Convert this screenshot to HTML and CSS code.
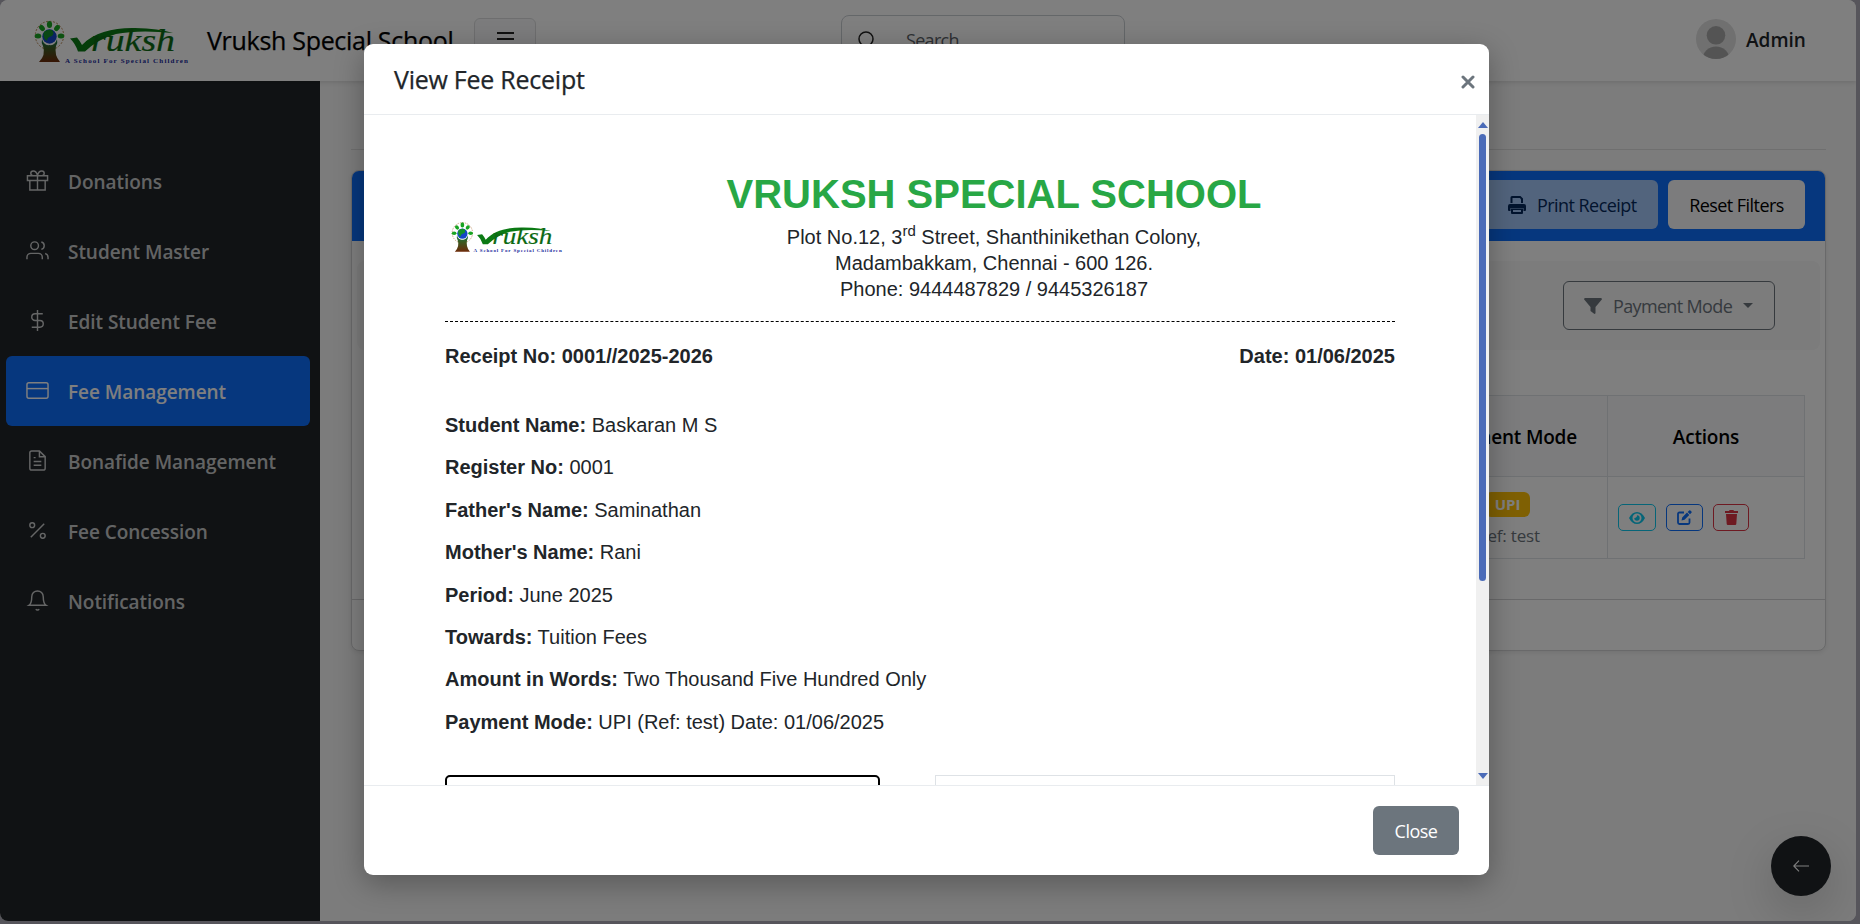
FILE: index.html
```html
<!DOCTYPE html>
<html lang="en">
<head>
<meta charset="utf-8">
<title>Vruksh Special School</title>
<link rel="stylesheet" href="styles.css">
</head>
<body>
<div class="window">
  <header class="topbar">
    <svg class="brand-logo" viewBox="0 0 158 46">
      <linearGradient id="trunk" x1="0" y1="0" x2="0" y2="1"><stop offset="0" stop-color="#0c7a50"/><stop offset=".4" stop-color="#3c5a20"/><stop offset="1" stop-color="#6e2a0a"/></linearGradient>
      <g id="logo">
        <circle cx="17.500" cy="16.500" r="14.200" fill="none" stroke="#b98a58" stroke-width="1" stroke-dasharray="2 1.500"/>
        <path d="M10 20Q9 24 11 27Q14 36 7 43H28Q22 36 24 27Q26 24 25 20Q23 27 17.500 26Q12 27 10 20Z" fill="url(#trunk)"/>
        <circle cx="17.500" cy="17.500" r="7.200" fill="#1546c8"/>
        <path d="M11.500 14Q14 10 20 11Q23 14 20 17Q15 18 15 22Q11 20 11.500 14Z" fill="#12912a"/>
        <g fill="#18a422"><ellipse cx="17.500" cy="5.500" rx="2.600" ry="3.600"/><ellipse cx="10" cy="9" rx="2.500" ry="3.300" transform="rotate(-40 10 9)"/><ellipse cx="25" cy="9" rx="2.500" ry="3.300" transform="rotate(40 25 9)"/><ellipse cx="6" cy="17" rx="3.300" ry="2.500"/><ellipse cx="29" cy="17" rx="3.300" ry="2.500"/></g>
        <path d="M38 19.500L45 18.500Q48 22 50 26C62 13 82 8.500 103 9Q127 9.500 141 14Q107 10.500 84 15Q66 20 53 32.500H46Q43 24 38 19.500Z" fill="#0b7a14"/>
        <text x="59" y="32" textLength="84" lengthAdjust="spacingAndGlyphs" class="logo-word">ruksh</text>
        <text x="33" y="43.500" textLength="123" lengthAdjust="spacing" class="logo-tag">A School For Special Children</text>
      </g>
    </svg>
    <span class="brand-name">Vruksh Special School</span>
    <button class="toggler"><svg width="20" height="20" viewBox="0 0 20 20" fill="none" stroke="#222" stroke-width="2"><path d="M2 1h17M2 7h17M2 13h17"/></svg></button>
    <div class="search">
      <span class="search-icon"><svg width="18" height="18" viewBox="0 0 18 18" fill="none" stroke="#222" stroke-width="1.500"><circle cx="8" cy="8" r="7"/><path d="M13 13l4.500 4.500"/></svg></span>
      <span class="search-text">Search</span>
    </div>
    <div class="user">
      <svg width="40" height="40" viewBox="0 0 40 40"><clipPath id="av"><circle cx="20" cy="20" r="20"/></clipPath><g clip-path="url(#av)"><rect width="40" height="40" fill="#e0e0e0"/><circle cx="20" cy="16.300" r="9.300" fill="#a9a9a9"/><ellipse cx="20" cy="40" rx="13.500" ry="12.500" fill="#a9a9a9"/></g></svg>
      <span class="user-name">Admin</span>
    </div>
  </header>

  <div class="body">
    <nav class="sidebar">
      <a class="item"><svg class="ico" viewBox="0 0 24 24"><path d="M20 12v10H4V12M1.500 7h21v5h-21zM12 22V7M12 7H7.500a2.500 2.500 0 010-5C11 2 12 7 12 7zM12 7h4.500a2.500 2.500 0 000-5C13 2 12 7 12 7z"/></svg><span>Donations</span></a>
      <a class="item"><svg class="ico" viewBox="0 0 24 24"><path d="M17 21v-2a4 4 0 00-4-4H5a4 4 0 00-4 4v2M23 21v-2a4 4 0 00-3-3.870M16 3.130a4 4 0 010 7.750"/><circle cx="9" cy="7" r="4"/></svg><span>Student Master</span></a>
      <a class="item"><svg class="ico" viewBox="0 0 24 24"><path d="M12 1v22M17.500 5H9.500a3.500 3.500 0 000 7h5a3.500 3.500 0 010 7H6"/></svg><span>Edit Student Fee</span></a>
      <a class="item active"><svg class="ico" viewBox="0 0 24 24"><rect x="1" y="4" width="22" height="16" rx="2"/><path d="M1 10h22"/></svg><span>Fee Management</span></a>
      <a class="item"><svg class="ico" viewBox="0 0 24 24"><path d="M14 2H6a2 2 0 00-2 2v16a2 2 0 002 2h12a2 2 0 002-2V8zM14 2v6h6M16 13H8M16 17H8M10 9H8"/></svg><span>Bonafide Management</span></a>
      <a class="item"><svg class="ico" viewBox="0 0 24 24"><path d="M19 5L5 19"/><circle cx="6.500" cy="6.500" r="2.500"/><circle cx="17.500" cy="17.500" r="2.500"/></svg><span>Fee Concession</span></a>
      <a class="item"><svg class="ico" viewBox="0 0 24 24"><path d="M18 8A6 6 0 006 8c0 7-3 9-3 9h18s-3-2-3-9M13.730 21a2 2 0 01-3.460 0"/></svg><span>Notifications</span></a>
    </nav>

    <main class="main">
      <div class="page-head"></div>
      <section class="card">
        <div class="card-head">
          <button class="btn-print"><svg width="18" height="18" viewBox="0 0 18 18"><path d="M4 0h8.500L15 2.500V7h-2V3.500L12 2H4.500v5h-2V1.500Q2.500 0 4 0zM2 8h14q2 0 2 2v4q0 1-1 1h-1.500v-3h-13v3H1q-1 0-1-1v-4q0-2 2-2zM3 12.500h12V17q0 1-1 1H4q-1 0-1-1zM5 14v2h8v-2z" fill="#05285c" fill-rule="evenodd"/></svg><span>Print Receipt</span></button>
          <button class="btn-reset"><span>Reset Filters</span></button>
        </div>
        <div class="card-body">
          <div class="filters">
            <button class="btn-mode"><svg width="18" height="16" viewBox="0 0 18 16"><path d="M1 0h16q1.500.5.6 1.800L11.500 9v6q-.5 1.500-1.700.5L6.500 13V9L.4 1.800Q-.5.5 1 0z" fill="#6c757d"/></svg><span>Payment Mode</span><i class="caret"></i></button>
          </div>
          <div class="table">
            <div class="cell th mode">Payment Mode</div>
            <div class="cell th">Actions</div>
            <div class="cell pay"><span class="badge">UPI</span><span class="ref">Ref: test</span></div>
            <div class="cell actions">
              <button class="mini info"><svg width="16" height="14" viewBox="0 0 16 14"><path d="M0 7Q3 1 8 1t8 6q-3 6-8 6T0 7zM8 2.500a4.500 4.500 0 100 9 4.500 4.500 0 000-9zM8 4.300A2.700 2.700 0 115.300 7Q8 7 8 4.300z" fill="#0dcaf0" fill-rule="evenodd"/></svg></button>
              <button class="mini prim"><svg width="15" height="15" viewBox="0 0 15 15"><path d="M7 2.500H2.500Q1 2.500 1 4v8.500Q1 14 2.500 14H11q1.500 0 1.500-1.500V8.500" fill="none" stroke="#0d6efd" stroke-width="1.800"/><path d="M4.500 10.500l.7-3L10 2.600l2.300 2.300-4.800 4.900zM10.700 1.900l1.400-1.400q.7-.7 1.300 0l1 1q.7.6 0 1.300l-1.400 1.400z" fill="#0d6efd"/></svg></button>
              <button class="mini dang"><svg width="13" height="15" viewBox="0 0 13 15"><path d="M0 1h4l.6-1h3.800L9 1h4v2H0zM1 4h11l-.7 10q-.1 1-1.100 1H2.800q-1 0-1.100-1z" fill="#dc3545"/></svg></button>
            </div>
          </div>
        </div>
        <div class="card-foot"></div>
      </section>
    </main>
  </div>
  <button class="fab"><svg width="16" height="12" viewBox="0 0 16 12" fill="none" stroke="#fff" stroke-width="1.100"><path d="M16 6H1M6 .7L.8 6 6 11.300"/></svg></button>
</div>

<div class="backdrop">
  <div class="modal">
    <div class="modal-head"><h5>View Fee Receipt</h5><svg width="14" height="14" viewBox="0 0 14 14" stroke="#6c757d" stroke-width="3" stroke-linecap="round"><path d="M2 2l10 10M12 2L2 12"/></svg></div>
    <div class="modal-body">
      <div class="receipt">
        <div class="r-head">
          <svg class="r-logo" viewBox="0 0 158 46"><use href="#logo"/></svg>
          <div class="r-org">
            <h1>VRUKSH SPECIAL SCHOOL</h1>
            <p>Plot No.12, 3<sup>rd</sup> Street, Shanthinikethan Colony,</p>
            <p>Madambakkam, Chennai - 600 126.</p>
            <p>Phone: 9444487829 / 9445326187</p>
          </div>
        </div>
        <div class="r-meta"><b>Receipt No: 0001//2025-2026</b><b>Date: 01/06/2025</b></div>
        <div class="r-rows">
          <p><b>Student Name:</b> Baskaran M S</p>
          <p><b>Register No:</b> 0001</p>
          <p><b>Father's Name:</b> Saminathan</p>
          <p><b>Mother's Name:</b> Rani</p>
          <p><b>Period:</b> June 2025</p>
          <p><b>Towards:</b> Tuition Fees</p>
          <p><b>Amount in Words:</b> Two Thousand Five Hundred Only</p>
          <p><b>Payment Mode:</b> UPI (Ref: test) Date: 01/06/2025</p>
        </div>
        <div class="r-boxes"><div class="box-a"></div><div class="box-b"></div></div>
      </div>
      <div class="scroll"><i class="up"></i><i class="thumb"></i><i class="down"></i></div>
    </div>
    <div class="modal-foot"><button class="btn-close"><span>Close</span></button></div>
  </div>
</div>
</body>
</html>
```
FILE: styles.css
```css
* { box-sizing: border-box; margin: 0; }
body { width: 1860px; height: 924px; overflow: hidden; background: #adabb6; font-family: "Open Sans", "Noto Sans", sans-serif; font-size: 20px; color: #212529; }
button { font: inherit; padding: 0; border: 0; background: none; display: flex; align-items: center; white-space: nowrap; }
span, p, h5 { white-space: nowrap; }
.logo-word { font: italic 400 31px "Liberation Serif", serif; fill: #0d6a14; stroke: #0d6a14; stroke-width: .2; }
.logo-tag { font: 700 7px "Liberation Serif", serif; fill: #1a2b9c; }

.window { position: relative; z-index: 0; width: 1856px; height: 921px; border-radius: 8px; overflow: hidden; background: #f8f8f8; }
.topbar { position: relative; height: 81px; display: flex; background: #fff; box-shadow: 0 2px 4px rgba(0,0,0,.1); z-index: 1; }
.brand-logo { width: 158px; height: 46px; margin: 19px 0 0 32px; overflow: visible; }
.brand-name { margin: 22px 0 0 17px; width: 267px; font-size: 25px; line-height: 36px; font-weight: 500; color: #000; letter-spacing: -0.3px; -webkit-text-stroke: .25px; }
.toggler { width: 62px; height: 48px; margin-top: 18px; border: 1px solid #dcdddf; border-radius: 6px; justify-content: center; background: #f8f9fa; }
.search { margin: 15px 0 0 305px; width: 284px; height: 49px; border: 1px solid #c9ced3; border-radius: 8px; display: flex; align-items: center; }
.search-icon { width: 49px; padding-left: 16px; line-height: 0; }
.search-text { margin-left: 15px; color: #5c6268; font-size: 18px; letter-spacing: -.7px; }
.user { margin: 19px 0 0 571px; height: 40px; display: flex; align-items: center; gap: 10px; }
.user-name { font-size: 19px; font-weight: 600; letter-spacing: 0; padding-top: 2px; }

.body { display: flex; height: 840px; }
.sidebar { width: 320px; background: #212529; padding: 65px 10px 0 6px; }
.item { height: 70px; display: flex; align-items: center; padding-left: 20px; gap: 19px; color: rgba(255,255,255,.77); font-weight: 600; font-size: 19px; letter-spacing: -.05px; border-radius: 6px; }
.item span { padding-top: 2px; }
.ico { width: 23px; height: 23px; fill: none; stroke: currentColor; stroke-width: 1.5; margin-top: -2px; }
.item.active { background: #0d6efd; color: #fff; }
.main { flex: 1; padding: 68px 30px 0 31px; background: #f8f8f8; }
.page-head { border-top: 1px solid #dfdfdf; height: 21px; }
.card { width: 1475px; height: 481px; border: 1px solid #d2d3d4; border-radius: 8px; background: #fff; overflow: hidden; display: flex; flex-direction: column; box-shadow: 0 2px 4px rgba(0,0,0,.07); }
.card-head { height: 70px; background: #0d6efd; display: flex; justify-content: flex-end; padding: 9px 20px 0 0; gap: 10px; }
.btn-print { width: 180px; height: 49px; border-radius: 6px; background: #a5c8fa; color: #04285c; padding-left: 30px; gap: 11px; font-size: 18px; letter-spacing: -.55px; }
.btn-reset { width: 137px; height: 49px; border-radius: 6px; background: #f8f9fa; color: #000; justify-content: center; font-size: 18px; letter-spacing: -.55px; }
.card-body { flex: 1; padding: 20px 5px 0; }
.filters { height: 89px; border-radius: 8px; background: #f8f8f8; display: flex; justify-content: flex-end; padding: 20px 45px 0 0; }
.btn-mode { width: 212px; height: 49px; border: 1px solid #6c757d; border-radius: 6px; color: #6c757d; padding-left: 20px; gap: 11px; font-size: 18px; letter-spacing: -.65px; }
.caret { border: 5px solid transparent; border-top-color: #6c757d; border-bottom: 0; }
.table { margin: 45px 15px 0 auto; width: 387px; display: grid; grid-template-columns: 190px 197px; grid-template-rows: 81px 82px; border-top: 1px solid #dee2e6; }
.cell { border-bottom: 1px solid #dee2e6; border-right: 1px solid #dee2e6; }
.th { display: flex; align-items: center; justify-content: center; font-weight: 600; font-size: 19px; letter-spacing: -.2px; padding-top: 2px; color: #000; background: #f8f9fa; }
.mode { padding-right: 7px; }
.pay { display: flex; flex-direction: column; align-items: center; padding-top: 15px; }
.badge { background: #ffc107; color: #fff; font-weight: 700; font-size: 15px; line-height: 25px; border-radius: 6px; padding: 0 10px; margin-right: 10px; }
.ref { font-size: 17px; line-height: 24px; margin: 7px 8px 0 0; color: #6c757d; letter-spacing: -.2px; }
.actions { display: flex; padding: 27px 0 0 10px; gap: 10px; }
.mini { height: 27px; border: 1px solid; border-radius: 5px; justify-content: center; }
.info { width: 38px; color: #0dcaf0; }
.prim { width: 37px; color: #0d6efd; }
.dang { width: 36px; color: #dc3545; }
.card-foot { height: 51px; border-top: 1px solid #d2d3d4; }
.fab { position: absolute; left: 1771px; top: 836px; width: 60px; height: 60px; border-radius: 50%; background: #212529; justify-content: center; box-shadow: 0 16px 48px rgba(0,0,0,.175); }

.backdrop { position: absolute; z-index: 5; inset: 0; background: rgba(0,0,0,.5); padding: 44px 0 0 364px; overflow: hidden; }
.modal { width: 1125px; height: 831px; border-radius: 9px; background: #fff; box-shadow: 0 8px 30px rgba(0,0,0,.3); display: flex; flex-direction: column; }
.modal-head { height: 71px; border-bottom: 1px solid #e9ecef; display: flex; justify-content: space-between; padding: 17px 14px 0 30px; }
.modal-head h5 { font-size: 25px; line-height: 36px; font-weight: 500; letter-spacing: -.25px; -webkit-text-stroke: .25px; }
.modal-head svg { margin-top: 14px; }
.modal-body { height: 670px; display: flex; overflow: hidden; font-family: "Liberation Sans", sans-serif; line-height: 26px; }
.receipt { width: 1112px; padding: 53px 81px 0; }
.r-head { height: 154px; border-bottom: 1px dashed #000; display: flex; }
.r-logo { width: 115px; height: 33px; margin: 53px 0 0 4px; overflow: visible; }
.r-org { margin-left: 154px; width: 552px; text-align: center; }
.r-org h1 { margin-bottom: 5px; padding-top: 1px; font-size: 40px; line-height: 50px; font-weight: 700; color: #28a745; white-space: nowrap; }
sup { font-size: 15px; line-height: 0; }
.r-meta { display: flex; justify-content: space-between; margin-top: 21px; }
.r-rows { margin-top: 43px; display: grid; row-gap: 16.4px; }
.r-boxes { display: flex; justify-content: space-between; margin-top: 40px; }
.box-a { width: 435px; height: 100px; border: 2px solid #000; border-radius: 5px; }
.box-b { width: 460px; height: 100px; border: 1px solid #dee2e6; }
.scroll { width: 13px; height: 670px; background: #f0f0f0; display: flex; flex-direction: column; align-items: center; padding-top: 7px; }
.up { border: 5px solid transparent; border-top: 0; border-bottom: 6px solid #4b6bb8; }
.thumb { width: 7px; height: 447px; border-radius: 4px; background: #4b6bb8; margin: 6px 0 192px; }
.down { border: 5px solid transparent; border-bottom: 0; border-top: 6px solid #4b6bb8; }
.modal-foot { flex: 1; border-top: 1px solid #e9ecef; display: flex; justify-content: flex-end; padding: 20px 30px 0 0; }
.btn-close { width: 86px; height: 49px; border-radius: 6px; background: #6c757d; color: #fff; justify-content: center; font-size: 18px; letter-spacing: -.5px; }
```
